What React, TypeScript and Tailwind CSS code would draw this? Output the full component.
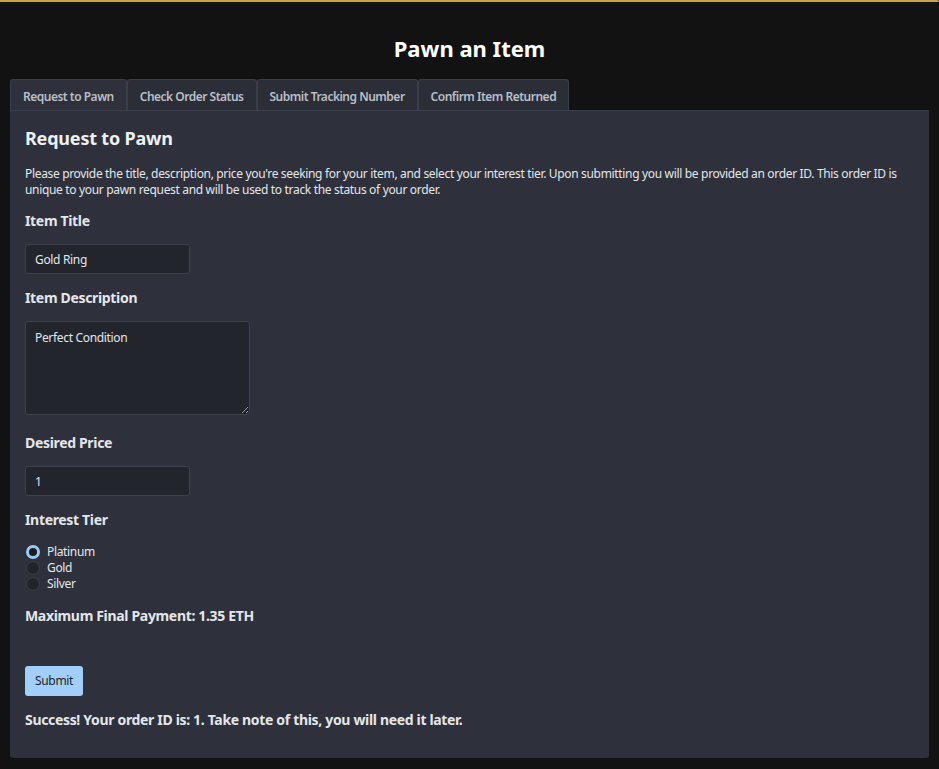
import { useState } from "react";

const tabs = [
  "Request to Pawn",
  "Check Order Status",
  "Submit Tracking Number",
  "Confirm Item Returned",
];

const tiers = ["Platinum", "Gold", "Silver"];

export default function App() {
  const [active, setActive] = useState(0);
  const [tier, setTier] = useState("Platinum");

  return (
    <div className="min-h-[769px] bg-[#121212] font-['Noto_Sans',sans-serif] text-[#e4e6ea]">
      <div className="h-[2px] rounded-tr-[8px] border-t-2 border-r border-[#c9a547]" />
      <div className="px-[10px] pb-[12px]">
        <h1 className="pt-[31px] pb-[16px] text-center text-[22px] font-bold leading-[30px] text-white">
          Pawn an Item
        </h1>

        <div className="flex">
          {tabs.map((t, i) => (
            <button
              key={t}
              onClick={() => setActive(i)}
              className={`h-[31px] rounded-t-[3px] border border-b-0 border-[#3a3e49] px-[12px] pt-[3px] text-[12px] font-semibold tracking-[-0.5px] text-[#b9bec7] ${
                i === active ? "bg-[#2e313c]" : "bg-[#2b2e37]"
              }`}
            >
              {t}
            </button>
          ))}
        </div>

        <div className="rounded-b-[3px] border-t border-[#3c404c] bg-[#2e313c] px-[15px] pt-[15px] pb-[28px] tracking-[-0.33px]">
          <h2 className="text-[18px] font-bold leading-[24px] tracking-[-0.2px] text-[#eef0f3]">Request to Pawn</h2>
          <p className="mt-[16px] text-[12px] leading-[16px]">
            Please provide the title, description, price you're seeking for your item, and select your interest
            tier. Upon submitting you will be provided an order ID. This order ID is unique to your pawn request and
            will be used to track the status of your order.
          </p>

          <label className="mt-[13px] block text-[14px] font-bold leading-[20px]">Item Title</label>
          <input
            defaultValue="Gold Ring"
            className="mt-[13px] block h-[30px] w-[165px] rounded-[3px] border border-[#3d414b] bg-[#22252c] px-[9px] text-[12px] text-[#e4e6ea] outline-none"
          />

          <label className="mt-[14px] block text-[14px] font-bold leading-[20px]">Item Description</label>
          <textarea
            defaultValue="Perfect Condition"
            className="mt-[13px] block h-[94px] w-[225px] rounded-[3px] border border-[#3d414b] bg-[#22252c] px-[9px] py-[7px] text-[12px] text-[#e4e6ea] outline-none"
          />

          <label className="mt-[18px] block text-[14px] font-bold leading-[20px]">Desired Price</label>
          <input
            defaultValue="1"
            className="mt-[13px] block h-[30px] w-[165px] rounded-[3px] border border-[#3d414b] bg-[#22252c] px-[9px] text-[12px] text-[#e4e6ea] outline-none"
          />

          <label className="mt-[14px] block text-[14px] font-bold leading-[20px]">Interest Tier</label>
          <div className="mt-[14px] flex flex-col">
            {tiers.map((t) => (
              <label key={t} className="flex h-[16px] cursor-pointer items-center gap-[7px] text-[12px]">
                <span
                  onClick={() => setTier(t)}
                  className={`ml-[1px] h-[14px] w-[14px] shrink-0 rounded-full ${
                    tier === t
                      ? "border-[3px] border-[#9ccaf6] bg-[#1b1d22]"
                      : "border border-[#3d414b] bg-[#21242b]"
                  }`}
                />
                <span onClick={() => setTier(t)}>{t}</span>
              </label>
            ))}
          </div>

          <p className="mt-[14px] text-[14px] font-bold leading-[20px]">Maximum Final Payment: 1.35 ETH</p>

          <button className="mt-[40px] block h-[30px] rounded-[3px] bg-[#a2cefa] px-[10px] text-[12px] text-[#1d232c]">
            Submit
          </button>

          <p className="mt-[14px] text-[14px] font-bold leading-[20px]">
            Success! Your order ID is: 1. Take note of this, you will need it later.
          </p>
        </div>
      </div>
    </div>
  );
}
